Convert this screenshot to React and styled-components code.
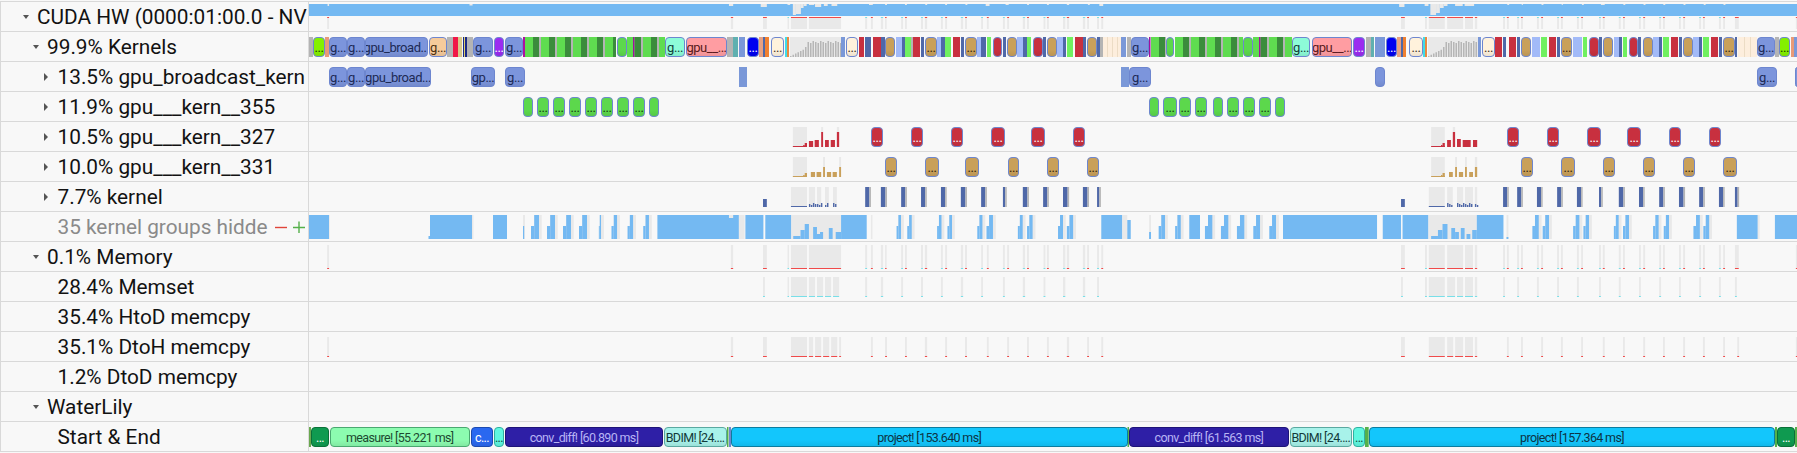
import React from "react";
import styled, { createGlobalStyle } from "styled-components";

const Global = createGlobalStyle`
  html, body { margin: 0; padding: 0; background: #f8f8f8; }
  body { overflow: hidden; }
`;

const ORIGIN = 309;
const z3 = (x) => 600 + x * 0.38265;
const z4 = (x) => 1200 + x * 0.38074;
const z1 = (x) => x * 0.38265;

const BLUE = "#74b9f2";
const SOFT = "#e9e9e9";
const TRACE_RED = "#f04a4a";
const TRACE_CYAN = "#78dfe8";

const Page = styled.div`
  width: 1797px;
  height: 453px;
  box-sizing: border-box;
  padding-top: 1px;
  overflow: hidden;
  background: #f8f8f8;
  font-family: Roboto, "Liberation Sans", sans-serif;
`;

const Tracks = styled.div`
  display: flex;
  flex-direction: column;
  border-top: 1px solid #d9d9d9;
  border-left: 1px solid #d9d9d9;
`;

const Row = styled.div`
  display: flex;
  height: 30px;
  box-sizing: border-box;
  border-bottom: 1px solid #d9d9d9;
`;

const Label = styled.div`
  width: 308px;
  flex: none;
  box-sizing: border-box;
  display: flex;
  align-items: center;
  padding: 2px 0 0 ${(p) => p.$indent}px;
  border-right: 1px solid #d9d9d9;
  overflow: hidden;
  white-space: nowrap;
  font-size: 20.8px;
  line-height: 27px;
  color: ${(p) => (p.$muted ? "#8a8a8a" : "#121212")};
`;

const Name = styled.span`
  flex: 0 0 auto;
`;

const Caret = styled.span`
  flex: none;
  width: 0;
  height: 0;
  margin-top: -2px;
  margin-right: ${(p) => (p.$open ? 8 : 10)}px;
  ${(p) =>
    p.$open
      ? `border-left: 3.5px solid transparent; border-right: 3.5px solid transparent; border-top: 4px solid #555; margin-left:-15px;`
      : `border-top: 4px solid transparent; border-bottom: 4px solid transparent; border-left: 4px solid #555; margin-left:-14px;`}
`;

const Actions = styled.span`
  flex: none;
  margin-left: auto;
  display: flex;
  align-items: center;
  gap: 6px;
  padding-right: 3px;
  margin-top: -2px;
`;

const Lane = styled.div`
  position: relative;
  flex: 1;
  overflow: hidden;
`;

const Canvas = styled.svg`
  position: absolute;
  left: 0;
  top: 0;
  display: block;
`;

const tones = {
  kernel: ["#6d86cf", "#7c95dc", "#1c2a55"],
  lime: ["#6d86cf", "#84f000", "#1c3a00"],
  peach: ["#6d86cf", "#f6cb9b", "#4a3010"],
  purple: ["#6d86cf", "#9b2cf0", "#ffffff"],
  green: ["#6d86cf", "#5cd84c", "#123a10"],
  aqua: ["#6d86cf", "#8dfcd8", "#12403a"],
  pink: ["#6d86cf", "#ff9da2", "#5a1a20"],
  deep: ["#6d86cf", "#0000f0", "#ffffff"],
  cream: ["#6d86cf", "#fff2dc", "#3a3020"],
  red: ["#6d86cf", "#c8303f", "#ffffff"],
  tan: ["#6d86cf", "#c9a05a", "#33240c"],
  forest: ["#0a7038", "#0f9a50", "#ffffff"],
  mint: ["#4aa870", "#8cfcb0", "#1c4a30"],
  cobalt: ["#1c4ab0", "#2a68f0", "#ffffff"],
  turquoise: ["#30b0a0", "#5ff7e0", "#124a40"],
  indigo: ["#1e1478", "#2e1fa6", "#b8b4f4"],
  ice: ["#5aa8a0", "#a8f2ea", "#123a3a"],
  sky: ["#0c7c9e", "#13c6fc", "#0c3446"],
};

const Slice = styled.div`
  position: absolute;
  top: 5px;
  height: 20px;
  box-sizing: border-box;
  display: flex;
  align-items: center;
  justify-content: center;
  border-radius: 4px;
  border: 1px solid ${(p) => tones[p.$tone][0]};
  background-color: ${(p) => tones[p.$tone][1]};
  background-image: linear-gradient(rgba(0, 0, 0, 0) 65%, rgba(0, 0, 0, 0.07) 100%);
  color: ${(p) => tones[p.$tone][2]};
  font-size: ${(p) => (p.$big ? 12.5 : 13)}px;
  letter-spacing: ${(p) => (p.$big ? -0.65 : -0.45)}px;
  white-space: nowrap;
  overflow: hidden;
`;

const Minus = () => (
  <svg width="12" height="12" viewBox="0 0 12 12"><path d="M0 6.5h12" stroke="#e0453a" strokeWidth="1.4" /></svg>
);
const Plus = () => (
  <svg width="12" height="12" viewBox="0 0 12 12"><path d="M0 6.5h12M6 0.5v12" stroke="#55b04a" strokeWidth="1.4" /></svg>
);

const Rects = ({ items, height = 28 }) => (
  <Canvas width={1797 - ORIGIN} height={height}>
    {items.map(([a, b, y, h, c], i) => (
      <rect key={i} x={a - ORIGIN} y={y} width={Math.max(b - a, 0.8)} height={h} fill={c} />
    ))}
  </Canvas>
);

const Slices = ({ items, big }) =>
  items.map(([a, b, tone, text], i) => (
    <Slice key={i} $tone={tone} $big={big} style={{ left: a - ORIGIN, width: b - a }}>
      {text}
    </Slice>
  ));

/* ---------- tick tables, in crop coordinates ---------- */
const pairTicks3 = [[693,698,"c"],[708,713,"r"],[734,740,"c"],[745,749,"r"],[787,792,"c"],[797,802,"r"],[839,844,"c"],[849,855,"r"],[891,896,"c"],[902,907,"r"],[943,949,"c"],[954,959,"r"],[996,1001,"c"],[1011,1016,"r"],[1053,1058,"c"],[1064,1069,"r"],[1105,1111,"c"],[1116,1121,"r"],[1159,1164,"c"],[1168,1173,"r"],[1210,1216,"c"],[1220,1226,"r"],[1262,1268,"c"],[1273,1278,"r"],[1299,1304,"c"],[1310,1315,"r"]];
const pairTicks4 = [[796,801,"c"],[806,811,"r"],[833,838,"c"],[843,848,"r"],[885,890,"c"],[896,901,"r"],[938,943,"c"],[948,953,"r"],[990,995,"c"],[1001,1006,"r"],[1048,1053,"c"],[1058,1063,"r"],[1100,1105,"c"],[1111,1116,"r"],[1153,1158,"c"],[1164,1169,"r"],[1206,1211,"c"],[1216,1221,"r"],[1258,1263,"c"],[1269,1274,"r"],[1311,1316,"c"],[1321,1326,"r"],[1363,1368,"c"],[1374,1379,"r"],[1405,1415,"r"]];

const memTicks = [
  [z1(855), z1(860), "r"],
  ...[[342,348,"r"],[426,436,"r"],[490,494,"c"],[499,541,"r"],[546,630,"r"],...pairTicks3].map(([a,b,k]) => [z3(a), z3(b), k]),
  ...[[528,538,"r"],[591,596,"c"],[601,643,"r"],[649,691,"r"],[696,717,"r"],[722,728,"r"],...pairTicks4,[1565,1568,"r"]].map(([a,b,k]) => [z4(a), z4(b), k]),
];

const tickRects = (list, top, h, markH = 1) =>
  list.flatMap(([a, b, k]) => [
    [a, b, top, h, SOFT],
    [a, b, top + h, markH, k === "r" ? TRACE_RED : TRACE_CYAN],
  ]);

const pairsOf = (conv, kind, flatList) =>
  flatList.reduce((o, v, i, s) => (i % 2 ? o : [...o, [conv(v), conv(s[i + 1]), kind]]), []);

const memsetTicks = [
  ...pairsOf(z3, "c", [426,431,490,494,499,541,546,562,567,583,588,604,609,625,693,698,734,740,787,792,839,844,891,896,943,949,996,1001,1053,1058,1105,1111,1159,1164,1210,1216,1262,1268,1299,1304]),
  ...pairsOf(z4, "c", [528,533,591,596,601,643,649,670,675,691,696,717,722,728,796,801,833,838,885,890,938,943,990,995,1048,1053,1100,1105,1153,1158,1206,1211,1258,1263,1311,1316,1363,1368,1405,1410]),
];

const dtohTicks = [
  [z1(855), z1(860), "r"],
  ...pairsOf(z3, "r", [342,348,426,436,499,541,546,557,562,578,583,599,604,620,625,630,708,713,745,750,797,802,849,855,902,907,954,959,1011,1016,1064,1069,1116,1121,1168,1173,1220,1226,1273,1278,1310,1315]),
  ...pairsOf(z4, "r", [528,538,601,643,649,665,670,691,696,717,722,728,806,811,843,848,896,901,948,953,1001,1006,1058,1063,1111,1116,1164,1169,1216,1221,1269,1274,1321,1326,1374,1379,1411,1416,1565,1568]),
];

/* ---------- top summary band ---------- */
const notches = [
  [z1(856),z1(860),2], [z1(1227),z1(1235),1.5],
  ...[[337,348,2],[420,436,3],[490,497,1],[504,512,11],[512,525,10],[525,532,4],[532,540,2],[546,560,1],[562,578,3],[585,595,2],[605,620,2],[703,713,1],[745,750,1],[797,802,1],[850,855,1],[902,907,1],[955,960,1],[1008,1018,2],[1060,1068,1],[1116,1121,1],[1168,1173,1],[1220,1226,1],[1275,1280,1],[1305,1315,2]].map(([a,b,h]) => [z3(a), z3(b), h]),
  ...[[523,537,3],[590,600,2],[605,620,11],[620,630,9],[630,640,4],[640,650,2],[670,690,2],[695,720,2],[807,812,1],[845,848,1],[897,902,1],[950,953,1],[1003,1008,1],[1053,1063,1],[1112,1117,1],[1165,1170,1],[1217,1222,1],[1270,1275,1],[1323,1328,1],[1375,1380,1]].map(([a,b,h]) => [z4(a), z4(b), h]),
];
const bandRects = [
  [ORIGIN, 1797, 2, 12, BLUE],
  ...notches.map(([a, b, h]) => [a, b, 2, h, SOFT]),
  ...memTicks.flatMap(([a, b, k]) => [
    [a, b, 15, 1, k === "r" ? TRACE_RED : TRACE_CYAN],
    [a, b, 16, 11, SOFT],
  ]),
];

/* ---------- kernels row stripes ---------- */
const G1 = "#5fdc50", G2 = "#3b8c3c", GR = "#b4b4b4", N = "#4f68a8", RD = "#c8303f", LB = "#a2baf8", LG = "#70f060", BL = "#7a98d8";
const greenStripes = (from, to) => {
  const out = [];
  for (let x = from; x < to; x += 16) {
    out.push([x, Math.min(x + 8, to), 0, 20, G1]);
    if (x + 8 < to) out.push([x + 8, Math.min(x + 14, to), 0, 20, G2]);
    if (x + 14 < to) out.push([x + 14, Math.min(x + 16, to), 0, 20, GR]);
  }
  return out;
};
const flat = (...list) => list.map(([a, b, c]) => [a, b, 0, 20, c]);

const grayMountain = (from, to) => {
  const out = [[from, to, 0, 20, SOFT]];
  for (let x = from; x < to; x += 2.5) {
    const t = x - from;
    const h = t < 14 ? 1 + t * 0.5 : t < 16 ? 10 : 16 - ((t / 2.5) % 3);
    out.push([x, x + 1.5, 20 - h, h, "#b6b6b6"]);
  }
  return out;
};

const kernelStripes = [
  ...flat([309,313,GR],[325,329,"#e89a78"],[447,453,GR],[453,458,"#f01848"],[458,462,"#d8c88a"],[463,464,"#1a2a88"],[464,465,"#e0d070"],[465,467,"#1a2a88"],[467,473,GR],[523,525,"#b010a0"]),
  ...greenStripes(525, 616),
  ...greenStripes(627, 665),
  ...flat([633,634.5,"#a010a0"]),
  ...flat([727,733,GR],[733,738,"#5fb0b0"],[739,745,BL],[759,763,"#e8a080"],[763,765,N],[765,769,"#f08030"],[785,787,"#40dce8"],[787,789,"#e88a40"]),
  ...grayMountain(790, 841),
  ...flat([841,845,BL]),
  ...flat([859,864,RD],[865,871,N],[873,881,RD],[881,885,N],[896,902,LB],[902,905,N],[905,911,LG],[911,913,GR],[913,920,RD],[921,924,N],[937,941,LB],[941,945,N],[945,951,LG],[953,960,RD],[961,964,N],[977,981,LB],[981,986,N],[987,991,LG],[1003,1006,N],[1017,1023,LB],[1023,1027,N],[1027,1031,LG],[1043,1046,N],[1057,1063,LB],[1063,1066,N],[1067,1073,LG],[1075,1083,RD],[1083,1086,N],[1097,1100,N],[1100,1103,GR]),
  ...flat([1103,1121,"#fdeedd"],[1107,1107.8,"#e8d8c0"],[1112,1112.8,"#e8d8c0"],[1117,1117.8,"#e8d8c0"],[1121,1126,BL],[1127,1131,GR],[1149,1150.5,"#a010a0"]),
  ...greenStripes(1151, 1166),
  ...greenStripes(1175, 1243),
  ...greenStripes(1253, 1292),
  ...flat([1259,1260.5,"#a010a0"]),
  ...flat([1366,1371,GR],[1371,1374,"#5fb0b0"],[1375,1385,BL],[1397,1401,"#e8a080"],[1401,1403,N],[1403,1406,"#f08030"],[1423,1425,"#40dce8"],[1425,1427,"#e88a40"]),
  ...grayMountain(1428, 1478),
  ...flat([1478,1481,BL]),
  ...flat([1495,1502,RD],[1503,1506,N],[1509,1516,RD],[1517,1520,N],[1532,1540,LB],[1541,1547,LG],[1549,1556,RD],[1557,1560,N],[1573,1582,LB],[1583,1587,LG],[1599,1602,N],[1614,1619,LB],[1619,1622,N],[1623,1627,LG],[1638,1641,N],[1653,1659,LB],[1659,1662,N],[1663,1669,LG],[1671,1678,RD],[1679,1682,N],[1693,1699,LB],[1699,1702,N],[1703,1709,LG],[1711,1718,RD],[1719,1722,N],[1735,1737,N]),
  ...flat([1738,1757,"#fdeedd"],[1744,1744.8,"#e8d8c0"],[1750,1750.8,"#e8d8c0"],[1775,1779,GR],[1791,1794,"#e89a78"],[1794,1797,BL]),
];

const kernelSlices = [
  [313,325,"lime","..."],[329,347,"kernel","g..."],[347,365,"kernel","g..."],[365,428,"kernel","gpu_broad..."],[429,447,"peach","g..."],[473,493,"kernel","g..."],[494,504,"purple","..."],[505,523,"kernel","g..."],
  [617,627,"green",""],[665,685,"aqua","g..."],[686,727,"pink","gpu__..."],[747,759,"deep","..."],[771,784,"cream","..."],[846,858,"cream","..."],
  [885,895,"tan",""],[925,937,"tan","..."],[965,977,"tan","..."],[993,1002,"red",""],[1007,1017,"tan",""],[1033,1043,"red",""],[1047,1057,"tan",""],[1087,1097,"tan",""],
  [1131,1149,"kernel","g..."],[1166,1174,"green",""],[1243,1253,"green",""],[1292,1310,"aqua","g..."],[1312,1352,"pink","gpu__..."],[1353,1365,"purple","..."],[1386,1397,"deep","..."],[1409,1423,"cream","..."],[1482,1495,"cream","..."],
  [1521,1531,"tan",""],[1561,1572,"tan","..."],[1589,1599,"red",""],[1603,1613,"tan",""],[1629,1638,"red",""],[1643,1653,"tan",""],[1683,1693,"tan",""],[1723,1735,"tan","..."],[1757,1775,"kernel","g..."],[1779,1790,"lime","..."],
];

const broadcastSlices = [
  [329,347,"kernel","g..."],[347,365,"kernel","g..."],[365,431,"kernel","gpu_broad..."],[471,495,"kernel","gp..."],[505,525,"kernel","g..."],[1129,1151,"kernel","g..."],[1375,1385,"kernel",""],[1757,1777,"kernel","g..."],[1795,1800,"kernel",""],
];
const broadcastFlat = [[739,747,5,20,BL],[1121,1129,5,20,BL]];

const greenSpans = [[523,533,""],[537,549,"..."],[553,565,"..."],[569,581,"..."],[585,597,"..."],[601,613,"..."],[617,629,"..."],[633,645,"..."],[649,659,""],[1149,1159,""],[1163,1177,"..."],[1179,1191,"..."],[1195,1207,"..."],[1213,1223,""],[1227,1239,"..."],[1243,1255,"..."],[1259,1271,"..."],[1275,1285,""]];

const redSpans = [[871,883],[911,923],[951,963],[991,1005],[1031,1045],[1073,1085],[1507,1519],[1547,1559],[1587,1601],[1627,1641],[1669,1681],[1709,1721]];
const tanSpans = [[885,897],[925,939],[965,979],[1008,1019],[1047,1059],[1087,1099],[1521,1533],[1561,1575],[1603,1615],[1643,1655],[1683,1695],[1723,1737]];

const barChart = (conv, ramp, bars, color) => {
  const out = [];
  ramp.forEach(([a, b]) => {
    out.push([conv(a), conv(b), 5, 20, SOFT]);
    out.push([conv(a), conv(b), 24, 1, color]);
    out.push([conv(b - 10), conv(b - 6), 23, 2, color]);
    out.push([conv(b - 6), conv(b), 21, 4, color]);
  });
  bars.forEach(([a, b, h]) => {
    if (h > 8) out.push([conv(a), conv(b), 5, 20 - h, SOFT]);
    out.push([conv(a), conv(b), 25 - h, h, color]);
  });
  return out;
};
const C327 = "#c8303f", C331 = "#c9a05a", C_K = "#4f68a8";
const graph327 = [
  ...barChart(z3, [[504,541]], [[546,557,6],[561,572,7],[578,583,15],[588,598,7],[603,614,7],[619,625,15]], C327),
  ...barChart(z4, [[607,643]], [[649,659,7],[664,670,15],[675,685,8],[690,711,7],[717,728,7]], C327),
];
const graph331 = [
  ...barChart(z3, [[504,541]], [[551,562,5],[566,578,5],[583,588,10],[593,604,5],[608,619,5],[625,630,10]], C331),
  ...barChart(z4, [[607,643]], [[654,664,5],[670,675,10],[680,691,5],[696,701,10],[707,717,5],[722,728,10]], C331),
];

const kernelBars = (conv, list) =>
  list.flatMap(([a, b]) => {
    const s = conv(a), e = conv(b);
    return [[s, e - 1.5, 5, 20, C_K], [e - 1.5, e, 5, 20, "#b4b4b4"]];
  });
const softColumns = (conv, list) =>
  list.flatMap(([a, b], i) => {
    const s = conv(a), e = conv(b);
    const out = [[s, e, 5, 20, SOFT]];
    if (i === 0) out.push([s, e, 24, 1, C_K]);
    else
      for (let x = s; x < e; x += 2) {
        const h = 2 + (Math.round(x * 7) % 3);
        out.push([x, x + 1.4, 25 - h, h, C_K]);
      }
    return out;
  });
const kernelGraph = [
  [z3(426), z3(436), 17, 8, C_K],
  ...softColumns(z3, [[499,541],[546,562],[567,578],[588,598],[609,619]]),
  ...kernelBars(z3, [[693,708],[734,750],[787,802],[839,854],[891,906],[943,959],[996,1011],[1053,1063],[1105,1121],[1158,1173],[1210,1226],[1262,1278],[1299,1309]]),
  [z4(528), z4(538), 17, 8, C_K],
  ...softColumns(z4, [[601,643],[649,664],[675,691],[696,717],[722,728]]),
  ...kernelBars(z4, [[796,811],[833,848],[885,900],[938,953],[990,1005],[1048,1058],[1100,1116],[1153,1168],[1206,1221],[1258,1274],[1311,1326],[1363,1378],[1405,1416]]),
];

/* ---------- hidden groups area graph ---------- */
const full = (a, b) => [a, b, 3, 24, BLUE];
const tooth = (a, b) => {
  const mid = a + (b - a) * 0.4;
  return [
    [mid, b + 2.5, 3, 24, SOFT],
    [a, mid, 14, 13, BLUE],
    [mid, b, 3, 24, BLUE],
    [b, b + 2.5, 3, 24, SOFT],
  ];
};
const areaGraph = [
  full(309, 329), [329,329.8,3,24,SOFT],
  full(430, 472), [428.5,430,24,3,BLUE], [472,473.5,3,24,SOFT],
  full(493, 507),
  ...tooth(531, 539), ...tooth(547, 555), ...tooth(563, 571), ...tooth(579, 587),
  [523,525,3,24,SOFT],[523,524.2,14,13,BLUE],
  ...[[-3,3],[30,45],[72,87],[113,128]].flatMap(([a,b]) => tooth(z3(a), z3(b))),
  full(z3(150), z3(363)), [z3(337),z3(348),3,3,SOFT],
  [z3(363),z3(378),3,24,SOFT],
  full(z3(380), z3(427)),
  full(z3(432), z3(500)),
  [z3(500),z3(630),3,24,SOFT],
  ...[[505,524,24,3],[524,535,18,9],[535,546,12,15],[557,567,15,12],[567,575,22,5],[575,583,20,7],[598,608,16,11],[616,630,20,7]].map(([a,b,y,h]) => [z3(a),z3(b),y,h,BLUE]),
  full(z3(630), z3(697)), [z3(708),z3(712),3,24,SOFT],
  ...[[775,787],[803,815],[881,893],[908,920],[986,1000],[1010,1027],[1092,1105],[1116,1131],[1197,1210],[1220,1237]].flatMap(([a,b]) => tooth(z3(a), z3(b))),
  full(z3(1310), z3(1365)), [z3(1365),z3(1378),3,24,SOFT], [z3(1378),z3(1387),8,19,BLUE],
  [z3(1435),z3(1440),3,24,SOFT],[z3(1435),z3(1440),20,7,BLUE],
  ...tooth(z3(1460), z3(1477)), ...tooth(z3(1503), z3(1518)),
  full(z3(1540), 1200),
  ...[[13,33],[55,75],[97,117],[140,158],[182,200]].flatMap(([a,b]) => tooth(z4(a), z4(b))),
  full(z4(218), z4(465)),
  full(z4(480), z4(528)),
  full(z4(532), z4(600)),
  [z4(600),z4(727),3,24,SOFT],
  ...[[607,625,24,3],[625,637,18,9],[637,650,12,15],[660,670,16,11],[670,680,20,7],[685,695,16,11],[700,710,22,5],[715,727,18,9]].map(([a,b,y,h]) => [z4(a),z4(b),y,h,BLUE]),
  full(z4(727), z4(797)),
  [z4(805),z4(810),3,24,SOFT],[z4(805),z4(810),25,2,BLUE],
  ...[[873,890],[900,917],[980,997],[1007,1022],[1087,1100],[1111,1127],[1190,1205],[1218,1232],[1296,1313],[1322,1338]].flatMap(([a,b]) => tooth(z4(a), z4(b))),
  full(z4(1410), z4(1465)), [z4(1465),z4(1470),3,24,SOFT],
  full(z4(1510), 1797),
];

const startEnd = [
  [311,329,"forest","..."],[329.5,470,"mint","measure! [55.221 ms]"],[471,493,"cobalt","c..."],[493.6,504.3,"turquoise","..."],[505,663,"indigo","conv_diff! [60.890 ms]"],[663.5,726.7,"ice","BDIM! [24...."],
  [731,1127.5,"sky","project! [153.640 ms]"],[1129,1288.7,"indigo","conv_diff! [61.563 ms]"],[1289.5,1352,"ice","BDIM! [24...."],[1353,1365,"turquoise","..."],[1369,1775,"sky","project! [157.364 ms]"],[1777,1795,"forest","..."],
];
const startEndSlivers = [[309,311,5,20,"#6aa84f"],[727,728.5,5,20,"#55b04a"],[729,731,5,20,"#6d86cf"],[1127.5,1129,5,20,"#55b04a"],[1365,1368.7,5,20,"#55b04a"],[1775,1777,5,20,"#55b04a"],[1795,1797,5,20,"#55b04a"]];

const tracks = [
  { label: "CUDA HW (0000:01:00.0 - NV", indent: 37, caret: "open" },
  { label: "99.9% Kernels", indent: 47, caret: "open" },
  { label: "13.5% gpu_broadcast_kern", indent: 56.5, caret: "closed" },
  { label: "11.9% gpu___kern__355", indent: 56.5, caret: "closed" },
  { label: "10.5% gpu___kern__327", indent: 56.5, caret: "closed" },
  { label: "10.0% gpu___kern__331", indent: 56.5, caret: "closed" },
  { label: "7.7% kernel", indent: 56.5, caret: "closed" },
  { label: "35 kernel groups hidde", indent: 56.5, muted: true, actions: true },
  { label: "0.1% Memory", indent: 47, caret: "open" },
  { label: "28.4% Memset", indent: 56.5 },
  { label: "35.4% HtoD memcpy", indent: 56.5 },
  { label: "35.1% DtoH memcpy", indent: 56.5 },
  { label: "1.2% DtoD memcpy", indent: 56.5 },
  { label: "WaterLily", indent: 47, caret: "open" },
  { label: "Start & End", indent: 56.5 },
];

const laneContent = [
  <Rects items={bandRects} />,
  <>
    <Canvas width={1797 - ORIGIN} height={25}>
      <g transform="translate(0 5)">
        {kernelStripes.map(([a, b, y, h, c], i) => (
          <rect key={i} x={a - ORIGIN} y={y} width={b - a} height={h} fill={c} />
        ))}
      </g>
    </Canvas>
    <Slices items={kernelSlices} />
  </>,
  <>
    <Rects items={broadcastFlat} />
    <Slices items={broadcastSlices} />
  </>,
  <Slices items={greenSpans.map(([a, b, t]) => [a, b, "green", t])} />,
  <>
    <Rects items={graph327} />
    <Slices items={redSpans.map(([a, b]) => [a, b, "red", "..."])} />
  </>,
  <>
    <Rects items={graph331} />
    <Slices items={tanSpans.map(([a, b]) => [a, b, "tan", "..."])} />
  </>,
  <Rects items={kernelGraph} />,
  <Rects items={areaGraph} />,
  <Rects items={tickRects(memTicks, 3, 23)} />,
  <Rects items={tickRects(memsetTicks, 5, 19)} />,
  null,
  <Rects items={tickRects(dtohTicks, 5, 19)} />,
  null,
  null,
  <>
    <Rects items={startEndSlivers} />
    <Slices items={startEnd} big />
  </>,
];

export default function App() {
  return (
    <Page>
      <Global />
      <Tracks>
        {tracks.map((t, i) => (
          <Row key={t.label}>
            <Label $indent={t.indent} $muted={t.muted}>
              {t.caret && <Caret $open={t.caret === "open"} />}
              <Name>{t.label}</Name>
              {t.actions && (
                <Actions>
                  <Minus />
                  <Plus />
                </Actions>
              )}
            </Label>
            <Lane>{laneContent[i]}</Lane>
          </Row>
        ))}
      </Tracks>
    </Page>
  );
}
